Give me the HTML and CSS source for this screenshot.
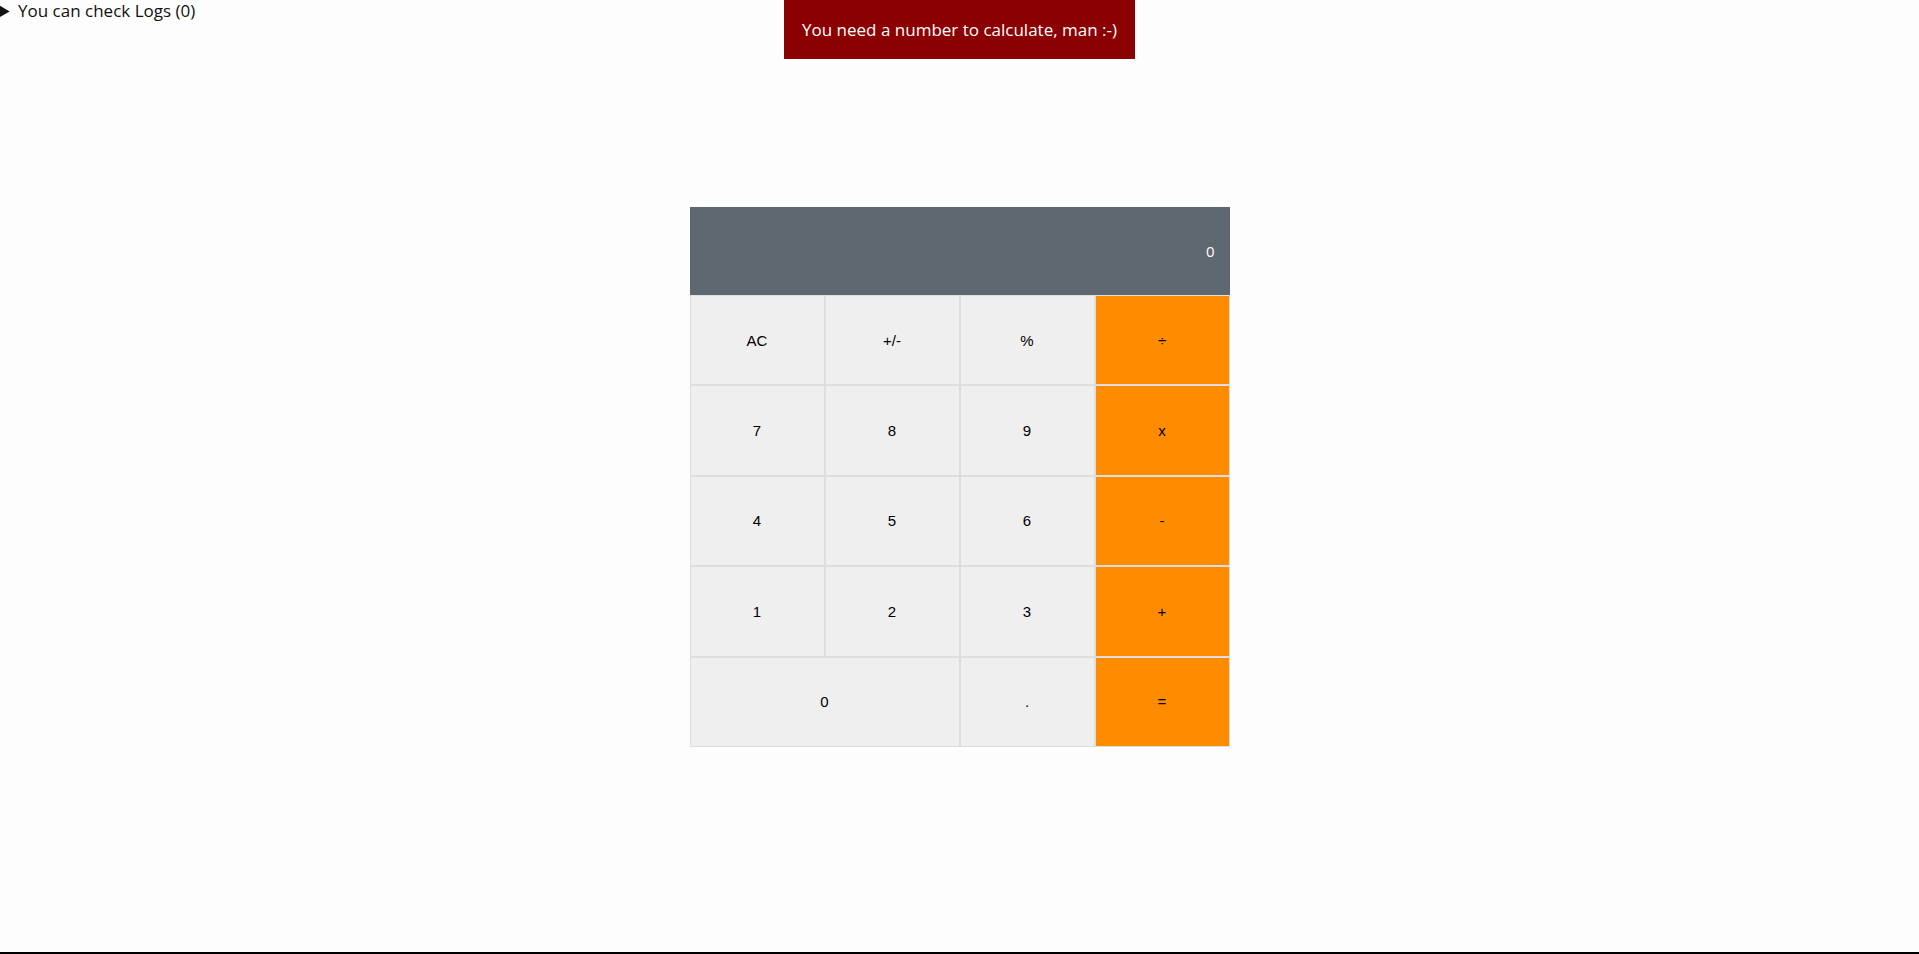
FILE: index.html
```html
<!DOCTYPE html>
<html lang="en">
<head>
<meta charset="utf-8">
<title>Calculator</title>
<link rel="stylesheet" href="styles.css">
</head>
<body>
<div class="page">
  <header class="topbar">
    <details class="logs">
      <summary>You can check Logs (0)</summary>
    </details>
    <div class="toast">You need a number to calculate, man :-)</div>
    <div class="spacer"></div>
  </header>
  <main class="stage">
    <div class="calc">
      <div class="display">0</div>
      <div class="keys">
        <button class="key">AC</button>
        <button class="key">+/-</button>
        <button class="key">%</button>
        <button class="key op">÷</button>
        <button class="key">7</button>
        <button class="key">8</button>
        <button class="key">9</button>
        <button class="key op">x</button>
        <button class="key">4</button>
        <button class="key">5</button>
        <button class="key">6</button>
        <button class="key op">-</button>
        <button class="key">1</button>
        <button class="key">2</button>
        <button class="key">3</button>
        <button class="key op">+</button>
        <button class="key wide">0</button>
        <button class="key">.</button>
        <button class="key op">=</button>
      </div>
    </div>
  </main>
</div>
</body>
</html>
```

FILE: styles.css
```css
html, body {
  margin: 0;
  padding: 0;
  background: #fdfdfd;
}
body {
  font-family: "Open Sans", "Noto Sans", sans-serif;
  color: #000;
}
.page {
  height: 100vh;
  box-sizing: border-box;
  border-bottom: 2px solid #000;
  display: flex;
  flex-direction: column;
}
.topbar {
  display: grid;
  grid-template-columns: 1fr auto 1fr;
  align-items: start;
}
.logs {
  font-size: 17px;
  line-height: 22px;
  color: #111;
}
.logs summary {
  cursor: pointer;
}
.toast {
  background: #8b0000;
  color: #fff;
  font-size: 17px;
  line-height: 23px;
  padding: 18px;
}
.stage {
  display: flex;
  justify-content: center;
  padding-top: 148px;
}
.calc {
  width: 540px;
}
.display {
  height: 88px;
  background: #5f6770;
  color: #fff;
  font-family: "Open Sans", "Noto Sans", sans-serif;
  font-size: 15px;
  display: flex;
  align-items: center;
  justify-content: flex-end;
  padding-right: 15px;
}
.keys {
  display: grid;
  grid-template-columns: repeat(4, 1fr);
  grid-template-rows: repeat(5, 90.4px);
}
.key {
  margin: 0;
  border: 1px solid #dedede;
  background: #efefef;
  color: #000;
  font-family: "Liberation Sans", Arial, sans-serif;
  font-size: 15px;
  padding: 0;
  cursor: pointer;
}
.key.op {
  background: #ff8c00;
}
.key.wide {
  grid-column: span 2;
}
```
